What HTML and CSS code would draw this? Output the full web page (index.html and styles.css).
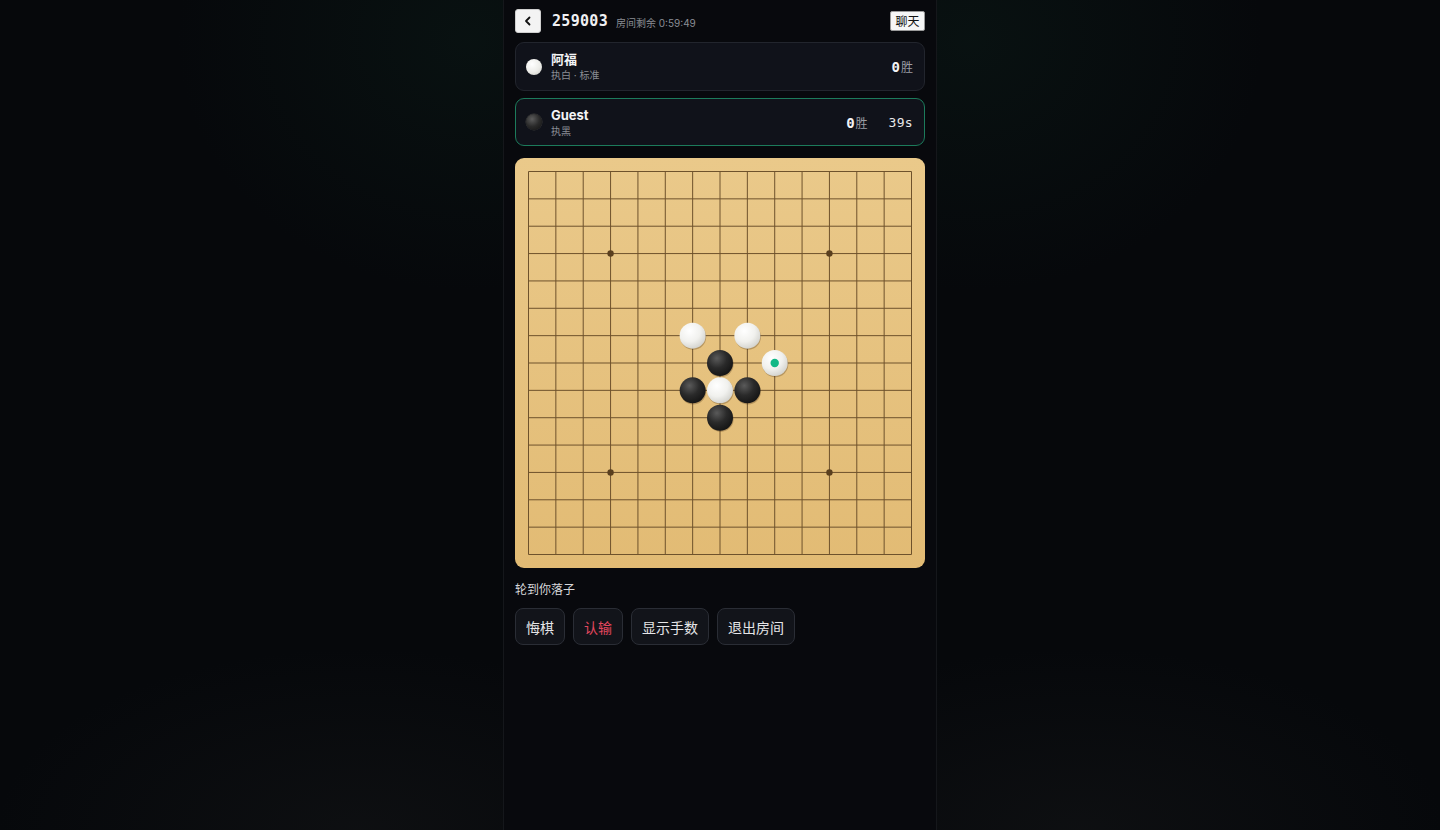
FILE: index.html
```html
<!DOCTYPE html>
<html lang="zh">
<head>
<meta charset="utf-8">
<title>259003</title>
<link rel="stylesheet" href="styles.css">
</head>
<body>
<div class="page">
  <main class="column">
    <header class="topbar">
      <button class="back" aria-label="返回">
        <svg width="12" height="12" viewBox="0 0 12 12"><path d="M7.5 2.5 L4 6 L7.5 9.5" fill="none" stroke="#111" stroke-width="1.8" stroke-linecap="round" stroke-linejoin="round"/></svg>
      </button>
      <span class="room">259003</span>
      <span class="remain">房间剩余 0:59:49</span>
      <button class="chat">聊天</button>
    </header>

    <section class="player">
      <span class="stone-icon white"></span>
      <div class="pinfo">
        <div class="pname">阿福</div>
        <div class="psub">执白 · 标准</div>
      </div>
      <div class="pstats"><span class="wins"><b>0</b>胜</span></div>
    </section>

    <section class="player active">
      <span class="stone-icon black"></span>
      <div class="pinfo">
        <div class="pname">Guest</div>
        <div class="psub">执黑</div>
      </div>
      <div class="pstats"><span class="wins"><b>0</b>胜</span><span class="timer">39s</span></div>
    </section>

    <div class="board">
      <svg width="410" height="410" viewBox="0 0 410 410" id="boardsvg">
        <defs>
          <radialGradient id="gw" cx="0.38" cy="0.32" r="0.75">
            <stop offset="0" stop-color="#ffffff"/>
            <stop offset="0.55" stop-color="#f1f1ee"/>
            <stop offset="1" stop-color="#cfcfca"/>
          </radialGradient>
          <radialGradient id="gb" cx="0.38" cy="0.32" r="0.75">
            <stop offset="0" stop-color="#5a5a5a"/>
            <stop offset="0.5" stop-color="#2a2a2a"/>
            <stop offset="1" stop-color="#121212"/>
          </radialGradient>
        </defs>
        <g id="grid" stroke="#6e522c" stroke-width="1"></g>
        <g id="stars" fill="#5a3f1e"></g>
        <g id="stones"></g>
      </svg>
    </div>

    <p class="status">轮到你落子</p>

    <div class="actions">
      <button class="act">悔棋</button>
      <button class="act danger">认输</button>
      <button class="act">显示手数</button>
      <button class="act">退出房间</button>
    </div>
  </main>
</div>
<script src="board.js"></script>
</body>
</html>
```

FILE: board.js
```js
(function () {
  var ns = "http://www.w3.org/2000/svg";
  var o = 13.5, step = 383 / 14;
  var grid = document.getElementById("grid");
  for (var i = 0; i < 15; i++) {
    var p = o + i * step;
    var h = document.createElementNS(ns, "line");
    h.setAttribute("x1", o); h.setAttribute("x2", o + 383);
    h.setAttribute("y1", p); h.setAttribute("y2", p);
    grid.appendChild(h);
    var v = document.createElementNS(ns, "line");
    v.setAttribute("y1", o); v.setAttribute("y2", o + 383);
    v.setAttribute("x1", p); v.setAttribute("x2", p);
    grid.appendChild(v);
  }
  var stars = document.getElementById("stars");
  [[3, 3], [11, 3], [3, 11], [11, 11], [7, 7]].forEach(function (s) {
    var c = document.createElementNS(ns, "circle");
    c.setAttribute("cx", o + s[0] * step);
    c.setAttribute("cy", o + s[1] * step);
    c.setAttribute("r", 3.2);
    stars.appendChild(c);
  });
  var stones = document.getElementById("stones");
  var list = [
    [6, 6, "w"], [8, 6, "w"], [7, 7, "b"], [9, 7, "w", 1],
    [6, 8, "b"], [7, 8, "w"], [8, 8, "b"], [7, 9, "b"]
  ];
  list.forEach(function (s) {
    var cx = o + s[0] * step, cy = o + s[1] * step;
    var sh = document.createElementNS(ns, "circle");
    sh.setAttribute("cx", cx + 0.6); sh.setAttribute("cy", cy + 1.2);
    sh.setAttribute("r", 13); sh.setAttribute("fill", "rgba(60,35,10,0.28)");
    stones.appendChild(sh);
    var c = document.createElementNS(ns, "circle");
    c.setAttribute("cx", cx); c.setAttribute("cy", cy);
    c.setAttribute("r", 13);
    c.setAttribute("fill", s[2] === "w" ? "url(#gw)" : "url(#gb)");
    stones.appendChild(c);
    if (s[3]) {
      var d = document.createElementNS(ns, "circle");
      d.setAttribute("cx", cx); d.setAttribute("cy", cy);
      d.setAttribute("r", 4.2); d.setAttribute("fill", "#12b886");
      stones.appendChild(d);
    }
  });
})();
```

FILE: styles.css
```css
* { box-sizing: border-box; }
html, body { margin: 0; padding: 0; }
body {
  background: #06080b;
  font-family: Inter, "Noto Sans CJK SC", sans-serif;
  color: #e8e8ea;
}
.page {
  min-height: 830px;
  display: flex;
  justify-content: center;
  background:
    radial-gradient(ellipse 420px 360px at 470px 40px, rgba(20,60,45,0.18), transparent 70%),
    radial-gradient(ellipse 420px 360px at 970px 40px, rgba(20,60,45,0.18), transparent 70%),
    radial-gradient(ellipse 520px 260px at 360px 830px, rgba(40,40,40,0.22), transparent 70%),
    radial-gradient(ellipse 520px 260px at 1080px 830px, rgba(40,40,40,0.22), transparent 70%),
    #06080b;
}
.column {
  width: 434px;
  min-height: 830px;
  background: #08090d;
  border-left: 1px solid #15171b;
  border-right: 1px solid #15171b;
  padding: 9px 11px 0 11px;
}
.topbar {
  display: flex;
  align-items: center;
  height: 24px;
}
.back {
  width: 26px; height: 24px;
  padding: 0; margin: 0;
  border: 1px solid #cfcfcf;
  border-radius: 3px;
  background: #f3f3f3;
  display: flex; align-items: center; justify-content: center;
}
.room {
  margin-left: 11px;
  font-family: "DejaVu Sans Mono", monospace;
  font-weight: bold;
  font-size: 15px;
  letter-spacing: 0.3px;
  color: #f0f0f2;
}
.remain {
  margin-left: 8px;
  font-size: 10px;
  color: #8a8d94;
  margin-top: 3px;
}
.chat {
  margin-left: auto;
  height: 20px;
  padding: 0 4.5px;
  border: 1px solid #9a9a9a;
  border-radius: 2px;
  background: #f6f6f6;
  font-family: "Noto Sans CJK SC", sans-serif;
  font-size: 12px;
  color: #111;
  line-height: 18px;
}
.player {
  margin-top: 9px;
  height: 49px;
  display: flex;
  align-items: center;
  padding: 0 11px 0 10px;
  background: #10121a;
  border: 1px solid #22252d;
  border-radius: 9px;
}
.player.active {
  margin-top: 7px;
  height: 48px;
  border-color: #1c7b5b;
}
.stone-icon {
  width: 16px; height: 16px; border-radius: 50%;
  flex: none;
}
.stone-icon.white { background: radial-gradient(circle at 38% 32%, #ffffff, #ecece8 55%, #c6c6c0); }
.stone-icon.black { background: radial-gradient(circle at 38% 32%, #5c5c5c, #2a2a2a 50%, #111); box-shadow: 0 0 0 0.5px #3a3a3a; }
.pinfo { margin-left: 9px; display: flex; flex-direction: column; }
.pname {
  font-size: 13px; font-weight: 700; color: #f4f4f6; line-height: 17px;
  font-family: Inter, "Noto Sans CJK SC", sans-serif;
}
.psub { font-size: 10px; color: #8a8d94; line-height: 14px; }
.pstats { margin-left: auto; display: flex; align-items: center; gap: 21px; }
.wins { font-size: 12px; color: #9a9da4; display: flex; align-items: baseline; }
.wins b {
  font-family: "DejaVu Sans Mono", monospace;
  font-size: 14px; color: #f2f2f4; margin-right: 1px;
}
.timer {
  font-family: "DejaVu Sans Mono", monospace;
  font-size: 13px; color: #e8e8ea; letter-spacing: 0.3px;
}
.board {
  margin-top: 12px;
  width: 410px; height: 410px;
  border-radius: 9px;
  background: linear-gradient(180deg, #eac98a 0%, #e6c27f 50%, #e2bb74 100%);
  overflow: hidden;
}
.board svg { display: block; }
.status {
  margin: 13px 0 0 0;
  font-size: 12px;
  color: #d6d7da;
  line-height: 16px;
  font-family: "Noto Sans CJK SC", sans-serif;
}
.actions {
  margin-top: 11px;
  display: flex;
  gap: 8px;
}
.act {
  height: 37px;
  padding: 0 10px;
  background: #12141a;
  border: 1px solid #2a2d35;
  border-radius: 8px;
  color: #e6e6e8;
  font-family: "Noto Sans CJK SC", sans-serif;
  font-size: 14px;
}
.act.danger { color: #e2475f; }
```
